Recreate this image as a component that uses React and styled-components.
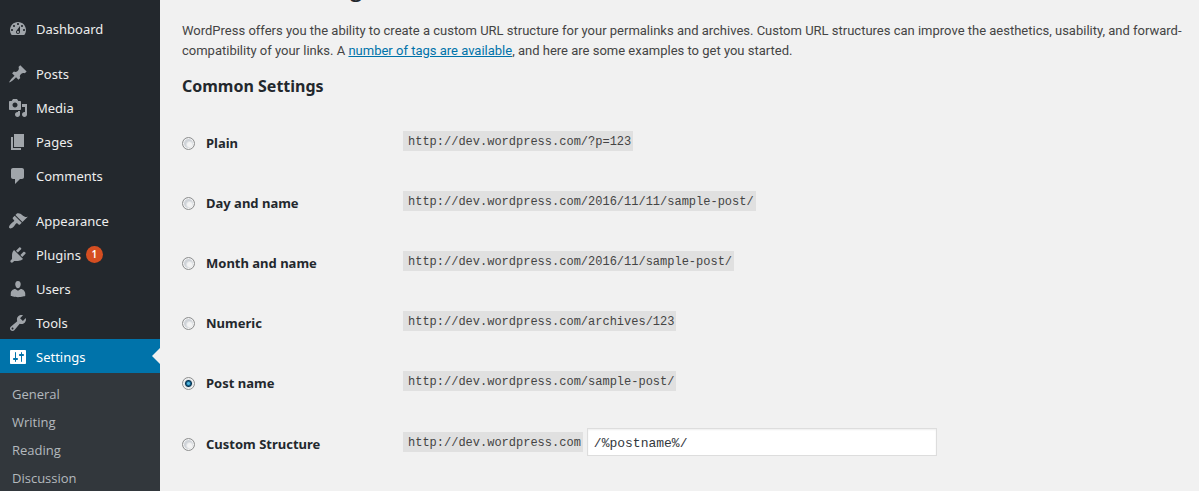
import React from "react";
import styled, { createGlobalStyle } from "styled-components";

const GlobalStyle = createGlobalStyle`
  * { box-sizing: border-box; }
  body {
    margin: 0;
    background: #f1f1f1;
    color: #444;
    font-family: "Noto Sans", "Open Sans", sans-serif;
    font-size: 13px;
    line-height: 20px;
  }
`;

const Page = styled.div`
  display: flex;
  height: 100vh;
  overflow: hidden;
`;

const Sidebar = styled.nav`
  flex: 0 0 160px;
  padding-top: 11px;
  background: #23282d;
`;

const Menu = styled.ul`
  margin: 0 0 11px;
  padding: 0;
  list-style: none;
`;

const MenuLink = styled.a`
  position: relative;
  display: flex;
  align-items: center;
  gap: 8px;
  height: 34px;
  padding: 1px 8px 0;
  color: ${(p) => (p.$current ? "#fff" : "#eee")};
  background: ${(p) => (p.$current ? "#0073aa" : "transparent")};
  text-decoration: none;

  &::after {
    content: ${(p) => (p.$current ? '""' : "none")};
    position: absolute;
    right: 0;
    top: 9px;
    border: 8px solid transparent;
    border-left-width: 0;
    border-right-color: #f1f1f1;
  }
`;

const Icon = styled.svg`
  flex: none;
  width: 20px;
  height: 20px;
  fill: ${(p) => (p.$current ? "#fff" : "#a0a5aa")};
`;

const Badge = styled.span`
  width: 17px;
  height: 17px;
  margin-left: -3px;
  border-radius: 50%;
  background: #d54e21;
  color: #fff;
  font-size: 10px;
  font-weight: 600;
  line-height: 17px;
  text-align: center;
`;

const Submenu = styled.ul`
  height: 100vh;
  margin: 0;
  padding: 7px 0;
  background: #32373c;
  font-family: "Open Sans", sans-serif;
  list-style: none;
`;

const SubmenuLink = styled.a`
  display: block;
  padding: 4px 12px;
  color: #b4b9be;
  text-decoration: none;
`;

const Main = styled.main`
  flex: 1;
  min-width: 0;
  padding-left: 22px;
`;

const Title = styled.h1`
  margin: -27px 0 0;
  color: #23282d;
  font-family: "Open Sans", sans-serif;
  font-size: 21px;
  font-weight: 600;
  line-height: 32px;
`;

const Intro = styled.p`
  margin: 16px 0 0;
  font-family: Roboto, sans-serif;
`;

const TextLink = styled.a`
  color: #0073aa;
`;

const SectionTitle = styled.h2`
  margin: 13px 0 15px;
  color: #23282d;
  font-size: 16px;
  font-weight: 700;
  line-height: 24px;
`;

const Options = styled.div`
  display: grid;
`;

const Option = styled.div`
  display: grid;
  grid-template-columns: 221px 1fr;
  align-items: center;
  height: ${(p) => (p.$tall ? "62px" : "60px")};
`;

const OptionLabel = styled.label`
  display: flex;
  align-items: center;
  gap: 11px;
  color: #23282d;
  font-weight: 700;
`;

const Radio = styled.input`
  appearance: none;
  width: 13px;
  height: 13px;
  margin: 0;
  border: 1px solid #8e8f8f;
  border-radius: 50%;
  background: radial-gradient(circle at 60% 60%, #f4f4f4 0 2px, #cfd3d8 4px);
  box-shadow: inset 0 0 0 1px #f4f4f4;

  &:checked {
    background: radial-gradient(circle, #4fb4dc 0 1px, #12618c 2px, #0b3450 3px, #dfe3e6 4px);
  }
`;

const Value = styled.div`
  display: flex;
  align-items: center;
  gap: 4px;
  padding-bottom: 4px;
`;

const Code = styled.code`
  padding: 2px 2px 0 5px;
  background: #e0e0e0;
  font-family: "Liberation Mono", monospace;
  font-size: 12px;
  line-height: 18px;
`;

const TextInput = styled.input`
  width: 350px;
  height: 28px;
  padding: 2px 6px 0;
  border: 1px solid #ddd;
  background: #fff;
  box-shadow: inset 0 1px 2px rgba(0, 0, 0, 0.07);
  color: #32373c;
  font-family: "Liberation Mono", monospace;
  font-size: 13px;
`;

const icons = {
  dashboard:
    "M3.76 16h12.48c1.1-1.37 1.76-3.11 1.76-5 0-4.42-3.58-8-8-8s-8 3.58-8 8c0 1.89.66 3.63 1.76 5zM10 4c.55 0 1 .45 1 1s-.45 1-1 1-1-.45-1-1 .45-1 1-1zM6 6c.55 0 1 .45 1 1s-.45 1-1 1-1-.45-1-1 .45-1 1-1zm8 0c.55 0 1 .45 1 1s-.45 1-1 1-1-.45-1-1 .45-1 1-1zm-5.37 5.55L12 7v6c0 1.1-.9 2-2 2s-2-.9-2-2c0-.57.24-1.08.63-1.45zM4 10c.55 0 1 .45 1 1s-.45 1-1 1-1-.45-1-1 .45-1 1-1zm12 0c.55 0 1 .45 1 1s-.45 1-1 1-1-.45-1-1 .45-1 1-1zm-5 3c0-.55-.45-1-1-1s-1 .45-1 1 .45 1 1 1 1-.45 1-1z",
  posts:
    "M10.44 3.02l1.82-1.82 6.36 6.35-1.83 1.82c-1.05-.68-2.48-.57-3.41.36l-.75.75c-.92.93-1.04 2.35-.35 3.41l-1.83 1.82-2.41-2.41-2.8 2.79c-.42.42-3.38 2.71-3.8 2.29s1.86-3.39 2.28-3.81l2.79-2.79L4.1 9.36l1.83-1.82c1.05.69 2.48.57 3.4-.36l.75-.75c.93-.92 1.05-2.35.36-3.41z",
  media:
    "M13 11V4c0-.55-.45-1-1-1h-1.67L9 1H5L3.67 3H2c-.55 0-1 .45-1 1v7c0 .55.45 1 1 1h10c.55 0 1-.45 1-1zM7 4.5c1.38 0 2.5 1.12 2.5 2.5S8.38 9.5 7 9.5 4.5 8.38 4.5 7 5.62 4.5 7 4.5zM14 6h5v10.5c0 1.38-1.12 2.5-2.5 2.5S14 17.88 14 16.5s1.12-2.5 2.5-2.5c.17 0 .34.02.5.05V9h-3V6zm-4 8.05V13h2v3.5c0 1.38-1.12 2.5-2.5 2.5S7 17.88 7 16.5 8.12 14 9.5 14c.17 0 .34.02.5.05z",
  pages: "M6 15V2h10v13H6zm-1 1h8v2H3V5h2v11z",
  comments:
    "M5 2h9c1.1 0 2 .9 2 2v7c0 1.1-.9 2-2 2h-2l-5 5v-5H5c-1.1 0-2-.9-2-2V4c0-1.1.9-2 2-2z",
  appearance:
    "M14.48 11.06L7.41 3.99l1.5-1.5c.5-.56 2.3-.47 3.51.32 1.21.8 1.43 1.28 2.91 2.1 1.18.64 2.45 1.26 4.45.85zm-.71.71L6.7 4.7 4.93 6.47c-.39.39-.39 1.02 0 1.41l1.06 1.06c.39.39.39 1.03 0 1.42-.6.6-1.43 1.11-2.21 1.69-.35.26-.7.53-1.01.84C1.43 14.23.4 16.08 1.4 17.07c.99 1 2.84-.03 4.18-1.36.31-.31.58-.66.85-1.02.57-.78 1.08-1.61 1.69-2.21.39-.39 1.02-.39 1.41 0l1.06 1.06c.39.39 1.02.39 1.41 0z",
  plugins:
    "M13.11 4.36L9.87 7.6 8 5.73l3.24-3.24c.35-.34 1.05-.2 1.56.32.52.51.66 1.21.31 1.55zm-8 1.77l.91-1.12 9.01 9.01-1.19.84c-.71.71-2.63 1.16-3.82 1.16H6.14L4.9 17.26c-.59.59-1.54.59-2.12 0-.59-.58-.59-1.53 0-2.12l1.24-1.24v-3.88c0-1.13.4-3.19 1.09-3.89zm7.26 3.97l3.24-3.24c.34-.35 1.04-.21 1.55.31.52.51.66 1.21.31 1.55l-3.24 3.25z",
  users:
    "M10 9.25c-2.27 0-2.73-3.44-2.73-3.44C7 4.02 7.82 2 9.97 2c2.16 0 2.98 2.02 2.71 3.81 0 0-.41 3.44-2.68 3.44zm0 2.57L12.72 10c2.39 0 4.52 2.33 4.52 4.53v2.49s-3.65 1.13-7.24 1.13c-3.65 0-7.24-1.13-7.24-1.13v-2.49c0-2.25 1.94-4.48 4.47-4.48z",
  tools:
    "M16.68 9.77c-1.34 1.34-3.3 1.67-4.95.99l-5.41 6.52c-.99.99-2.59.99-3.58 0s-.99-2.59 0-3.57l6.52-5.42c-.68-1.65-.35-3.61.99-4.95 1.28-1.28 3.12-1.62 4.72-1.06l-2.89 2.89 2.82 2.82 2.86-2.87c.53 1.58.18 3.39-1.08 4.65zM3.81 16.21c.4.39 1.04.39 1.43 0 .4-.4.4-1.04 0-1.43-.39-.4-1.03-.4-1.43 0-.39.39-.39 1.03 0 1.43z",
  settings:
    "M18 16V4c0-.55-.45-1-1-1H3c-.55 0-1 .45-1 1v12c0 .55.45 1 1 1h14c.55 0 1-.45 1-1zM8 11h1c.55 0 1 .45 1 1s-.45 1-1 1H8v1.5c0 .28-.22.5-.5.5s-.5-.22-.5-.5V13H6c-.55 0-1-.45-1-1s.45-1 1-1h1V5.5c0-.28.22-.5.5-.5s.5.22.5.5V11zm5-2h-1c-.55 0-1-.45-1-1s.45-1 1-1h1V5.5c0-.28.22-.5.5-.5s.5.22.5.5V7h1c.55 0 1 .45 1 1s-.45 1-1 1h-1v5.5c0 .28-.22.5-.5.5s-.5-.22-.5-.5V9z",
};

const menuGroups = [
  [{ icon: "dashboard", label: "Dashboard" }],
  [
    { icon: "posts", label: "Posts" },
    { icon: "media", label: "Media" },
    { icon: "pages", label: "Pages" },
    { icon: "comments", label: "Comments" },
  ],
  [
    { icon: "appearance", label: "Appearance" },
    { icon: "plugins", label: "Plugins", count: 1 },
    { icon: "users", label: "Users" },
    { icon: "tools", label: "Tools" },
    {
      icon: "settings",
      label: "Settings",
      current: true,
      children: ["General", "Writing", "Reading", "Discussion"],
    },
  ],
];

const structures = [
  { id: "plain", label: "Plain", url: "http://dev.wordpress.com/?p=123" },
  { id: "day", label: "Day and name", url: "http://dev.wordpress.com/2016/11/11/sample-post/" },
  { id: "month", label: "Month and name", url: "http://dev.wordpress.com/2016/11/sample-post/" },
  { id: "numeric", label: "Numeric", url: "http://dev.wordpress.com/archives/123" },
  { id: "postname", label: "Post name", url: "http://dev.wordpress.com/sample-post/" },
  { id: "custom", label: "Custom Structure", url: "http://dev.wordpress.com", editable: true },
];

function MenuItem({ item }) {
  return (
    <li>
      <MenuLink href="#" $current={item.current}>
        <Icon viewBox="0 0 20 20" $current={item.current} aria-hidden="true">
          <path d={icons[item.icon]} />
        </Icon>
        {item.label}
        {item.count && <Badge>{item.count}</Badge>}
      </MenuLink>
      {item.children && (
        <Submenu>
          {item.children.map((child) => (
            <li key={child}>
              <SubmenuLink href="#">{child}</SubmenuLink>
            </li>
          ))}
        </Submenu>
      )}
    </li>
  );
}

export default function App() {
  return (
    <>
      <GlobalStyle />
      <Page>
        <Sidebar>
          {menuGroups.map((group) => (
            <Menu key={group[0].label}>
              {group.map((item) => (
                <MenuItem key={item.label} item={item} />
              ))}
            </Menu>
          ))}
        </Sidebar>
        <Main>
          <Title>Permalink Settings</Title>
          <Intro>
            WordPress offers you the ability to create a custom URL structure for your permalinks and
            archives. Custom URL structures can improve the aesthetics, usability, and
            forward-compatibility of your links. A{" "}
            <TextLink href="#">number of tags are available</TextLink>, and here are some examples to
            get you started.
          </Intro>
          <SectionTitle>Common Settings</SectionTitle>
          <Options>
            {structures.map((s) => (
              <Option key={s.id} $tall={s.editable}>
                <OptionLabel>
                  <Radio type="radio" name="structure" defaultChecked={s.id === "postname"} />
                  {s.label}
                </OptionLabel>
                <Value>
                  <Code>{s.url}</Code>
                  {s.editable && (
                    <TextInput type="text" aria-label="Custom structure" defaultValue="/%postname%/" />
                  )}
                </Value>
              </Option>
            ))}
          </Options>
        </Main>
      </Page>
    </>
  );
}
